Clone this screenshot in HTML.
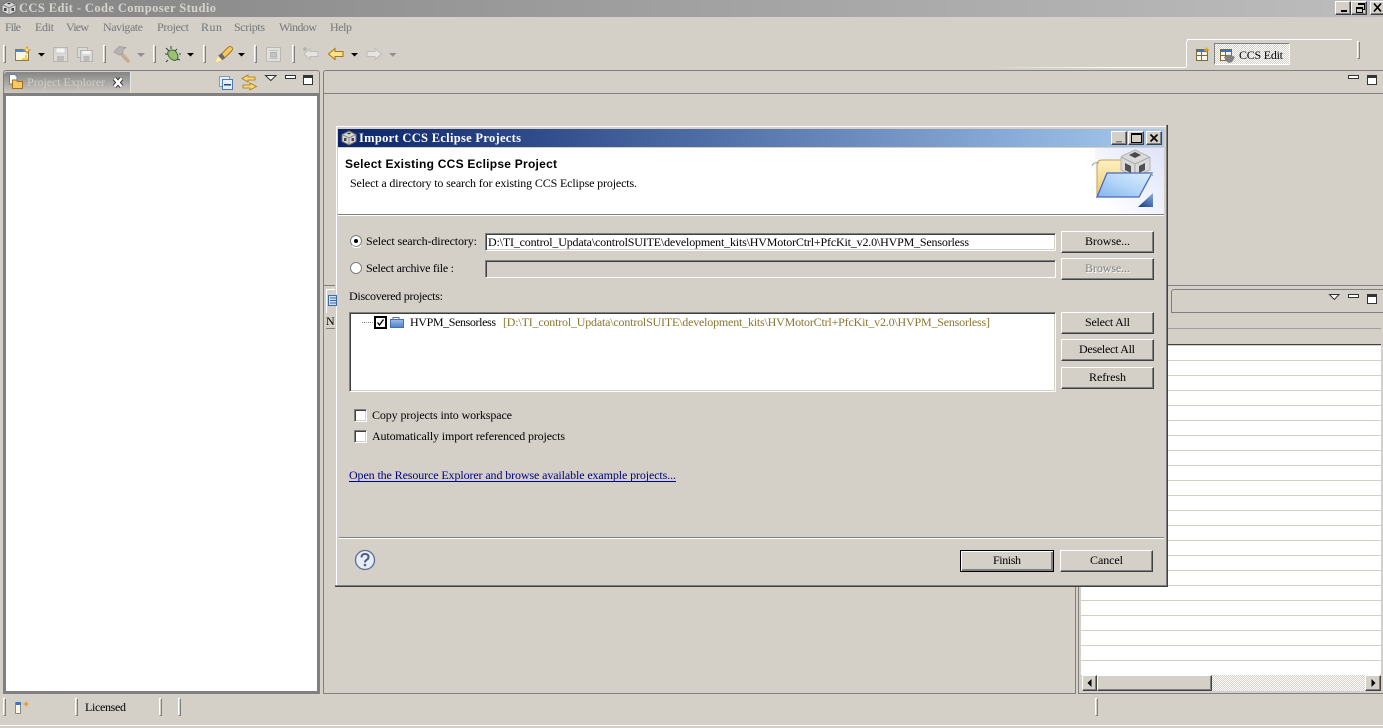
<!DOCTYPE html>
<html><head><meta charset="utf-8"><title>CCS Edit - Code Composer Studio</title>
<style>
html,body{margin:0;padding:0;background:#d4d0c8;overflow:hidden}
#p{position:relative;width:1383px;height:728px;overflow:hidden;background:#d4d0c8}
#p div{position:absolute;box-sizing:border-box}
.btn{background:#d4d0c8;border-top:1px solid #fff;border-left:1px solid #fff;border-right:1px solid #404040;border-bottom:1px solid #404040;box-shadow:inset -1px -1px 0 #808080}
.sunk{background:#fff;border-top:1px solid #808080;border-left:1px solid #808080;border-right:1px solid #fff;border-bottom:1px solid #fff;box-shadow:inset 1px 1px 0 #404040,inset -1px -1px 0 #d4d0c8}
.sep{width:3px;border-left:1px solid #fff;border-top:1px solid #fff;border-right:1px solid #808080;border-bottom:1px solid #808080}
svg{position:absolute;left:0;top:0}
text{font-family:"Liberation Serif","Noto Serif CJK SC",serif;font-size:12px;fill:#000}
.m{fill:#777}
.b{font-weight:bold}
</style></head><body><div id="p">

<!-- title bar -->
<div style="left:0;top:0;width:1383px;height:17px;background:linear-gradient(90deg,#858585,#bdbdbd)"></div>
<div class="btn" style="left:1335px;top:1px;width:16px;height:14px"></div>
<div class="btn" style="left:1351px;top:1px;width:16px;height:14px"></div>
<div class="btn" style="left:1370px;top:1px;width:16px;height:14px"></div>

<!-- toolbar separators -->
<div class="sep" style="left:3px;top:45px;height:18px"></div>
<div class="sep" style="left:103px;top:45px;height:18px"></div>
<div class="sep" style="left:153px;top:45px;height:18px"></div>
<div class="sep" style="left:203px;top:45px;height:18px"></div>
<div class="sep" style="left:254px;top:45px;height:18px"></div>
<div class="sep" style="left:292px;top:45px;height:18px"></div>

<!-- perspective bar -->
<div style="left:985px;top:67px;width:201px;height:1px;background:linear-gradient(90deg,rgba(255,255,255,0),#fff 65%)"></div>
<div style="left:1186px;top:41px;width:1px;height:26px;background:#fff"></div>
<div style="left:1187px;top:39px;width:165px;height:1px;background:#fff"></div>
<div style="left:1187px;top:40px;width:1px;height:1px;background:#fff"></div>
<div style="left:1214px;top:43px;width:76px;height:22px;border-top:1px solid #808080;border-left:1px solid #808080;border-right:1px solid #fff;border-bottom:1px solid #fff;background:repeating-conic-gradient(#fff 0 25%,#d4d0c8 0 50%) 0 0/2px 2px"></div>
<div class="sep" style="left:1357px;top:41px;height:18px"></div>

<!-- left panel -->
<div style="left:3px;top:70px;width:317px;height:624px;background:#d4d0c8;border:1px solid #808080;border-bottom:0;border-radius:3px 3px 0 0"></div>
<div style="left:4px;top:72px;width:127px;height:22px;background:linear-gradient(180deg,#858585,#cfccc4);border-right:1px solid #e8e6e0;border-radius:3px 0 0 0"></div>
<div style="left:3px;top:93px;width:317px;height:601px;background:#fff;border:3px solid #808080"></div>

<!-- center panel -->
<div style="left:323px;top:70px;width:1060px;height:216px;border:1px solid #808080;border-right:0;border-radius:3px 0 0 0"></div>
<div style="left:324px;top:93px;width:1059px;height:1px;background:#808080"></div>
<div style="left:323px;top:285px;width:753px;height:409px;border:1px solid #808080;background:#d4d0c8"></div>
<div style="left:326px;top:289px;width:1px;height:24px;background:#fff"></div>
<div style="left:327px;top:289px;width:10px;height:1px;background:#fff"></div>
<div style="left:326px;top:328px;width:12px;height:1px;background:#808080"></div>

<!-- right lower panel -->
<div style="left:1078px;top:285px;width:305px;height:409px;border-top:1px solid #808080;border-left:1px solid #808080;border-bottom:1px solid #808080;background:#d4d0c8"></div>
<div style="left:1171px;top:289px;width:212px;height:24px;border-top:1px solid #808080;border-left:1px solid #808080;border-bottom:1px solid #808080;border-radius:3px 0 0 0"></div>
<div style="left:1168px;top:328px;width:213px;height:1px;background:#a0a0a0"></div>
<div style="left:1081px;top:344px;width:300px;height:331px;background-image:linear-gradient(180deg,#fff 0 14px,#d4d0c8 14px 15px);background-size:100% 15px;background-position:0 2px"></div>
<div style="left:1081px;top:344px;width:300px;height:1px;background:#404040"></div>
<div style="left:1082px;top:675px;width:299px;height:16px;background:repeating-conic-gradient(#fff 0 25%,#d4d0c8 0 50%) 0 0/2px 2px"></div>
<div class="btn" style="left:1082px;top:675px;width:15px;height:16px"></div>
<div class="btn" style="left:1097px;top:675px;width:115px;height:16px"></div>
<div class="btn" style="left:1365px;top:675px;width:16px;height:16px"></div>

<!-- status bar -->
<div class="sep" style="left:3px;top:698px;height:18px"></div>
<div class="sep" style="left:75px;top:698px;height:18px"></div>
<div class="sep" style="left:159px;top:698px;height:18px"></div>
<div class="sep" style="left:178px;top:698px;height:18px"></div>
<div class="sep" style="left:1095px;top:698px;height:18px"></div>
<div style="left:0;top:725px;width:1383px;height:1px;background:#fff"></div>

<!-- dialog -->
<div style="left:335px;top:125px;width:833px;height:462px;background:#d4d0c8;border-right:1px solid #404040;border-bottom:1px solid #404040;box-shadow:inset -1px -1px 0 #808080,inset 1px 1px 0 #d4d0c8,inset 2px 2px 0 #fff"></div>
<div style="left:338px;top:129px;width:826px;height:18px;background:linear-gradient(90deg,#0a246a,#a6caf0)"></div>
<div class="btn" style="left:1111px;top:131px;width:16px;height:14px"></div>
<div class="btn" style="left:1128px;top:131px;width:16px;height:14px"></div>
<div class="btn" style="left:1146px;top:131px;width:16px;height:14px"></div>
<div style="left:338px;top:148px;width:826px;height:66px;background:#fff"></div>
<div style="left:338px;top:214px;width:826px;height:1px;background:#808080"></div>
<div style="left:338px;top:215px;width:826px;height:1px;background:#fff"></div>

<div class="sunk" style="left:485px;top:233px;width:571px;height:18px"></div>
<div class="sunk" style="left:485px;top:260px;width:571px;height:18px;background:#d4d0c8"></div>
<div class="btn" style="left:1061px;top:231px;width:93px;height:22px"></div>
<div class="btn" style="left:1061px;top:258px;width:93px;height:22px"></div>
<div class="sunk" style="left:349px;top:312px;width:707px;height:80px"></div>
<div class="btn" style="left:1061px;top:312px;width:93px;height:22px"></div>
<div class="btn" style="left:1061px;top:339px;width:93px;height:22px"></div>
<div class="btn" style="left:1061px;top:367px;width:93px;height:22px"></div>

<div class="sunk" style="left:354px;top:409px;width:13px;height:13px"></div>
<div class="sunk" style="left:354px;top:430px;width:13px;height:13px"></div>

<div style="left:339px;top:537px;width:825px;height:1px;background:#808080"></div>
<div style="left:339px;top:538px;width:825px;height:1px;background:#fff"></div>
<div class="btn" style="left:960px;top:550px;width:94px;height:22px;outline:1px solid #000;outline-offset:-1px;box-shadow:inset 1px 1px 0 #fff,inset -2px -2px 0 #808080"></div>
<div class="btn" style="left:1060px;top:550px;width:93px;height:22px"></div>

<svg width="1383" height="728" viewBox="0 0 1383 728">
<defs>
<linearGradient id="f1" x1="1" y1="0" x2="0" y2="1"><stop offset="0" stop-color="#dbeefc"/><stop offset="0.5" stop-color="#b4d6f8"/><stop offset="1" stop-color="#86b4ee"/></linearGradient>
<linearGradient id="f2" x1="0" y1="0" x2="0" y2="1"><stop offset="0" stop-color="#fdf0c0"/><stop offset="1" stop-color="#eec870"/></linearGradient>
<linearGradient id="f3" x1="0" y1="0" x2="0" y2="1"><stop offset="0" stop-color="#9cbfe8"/><stop offset="1" stop-color="#4f7fcc"/></linearGradient>
<linearGradient id="wiz" gradientUnits="userSpaceOnUse" x1="1164" y1="152" x2="1104" y2="205"><stop offset="0" stop-color="#dfe4f8"/><stop offset="1" stop-color="#fff"/></linearGradient>
<linearGradient id="tri" x1="1" y1="0" x2="0.3" y2="1"><stop offset="0" stop-color="#8cb0e0"/><stop offset="1" stop-color="#1f4a90"/></linearGradient>
<g id="cube">
 <path d="M8 1 15 4.500 15 11.500 8 15 1 11.500 1 4.500Z" fill="#d8d8d8" stroke="#707070"/>
 <path d="M1 4.500 8 8 15 4.500M8 8V15" fill="none" stroke="#8a8a8a"/>
 <path d="M6 3.500 8 2.500 10 3.500 8 4.500Z" fill="#333"/>
 <rect x="3" y="8" width="2.500" height="3" fill="#444"/>
 <rect x="10.500" y="8" width="2.500" height="3" fill="#444"/>
</g>
</defs>

<!-- app icon + title -->
<use href="#cube" x="1" y="0"/>
<text x="19" y="12" class="b" style="font-size:12.500px;fill:#d6d3cc" textLength="197">CCS Edit - Code Composer Studio</text>

<!-- window buttons -->
<rect x="1341" y="10" width="6" height="2" fill="#000"/>
<path d="M1358.500 4.500h6v5h-2" fill="none" stroke="#000"/><rect x="1358" y="3" width="7" height="2" fill="#000"/>
<rect x="1356.500" y="7.500" width="6" height="5" fill="#d4d0c8" stroke="#000"/><rect x="1356" y="7" width="7" height="2" fill="#000"/>
<path d="M1374 3.500 1381 11.500M1381 3.500 1374 11.500" stroke="#000" stroke-width="1.700"/>

<!-- menu -->
<g>
<text class="m" x="5" y="31" textLength="16">File</text>
<text class="m" x="35" y="31" textLength="19">Edit</text>
<text class="m" x="66" y="31" textLength="23">View</text>
<text class="m" x="103" y="31" textLength="40">Navigate</text>
<text class="m" x="157" y="31" textLength="32">Project</text>
<text class="m" x="201" y="31" textLength="21">Run</text>
<text class="m" x="234" y="31" textLength="31">Scripts</text>
<text class="m" x="279" y="31" textLength="38">Window</text>
<text class="m" x="330" y="31" textLength="22">Help</text>
</g>

<!-- toolbar icons -->
<g shape-rendering="crispEdges">
 <rect x="15.500" y="49.500" width="13" height="11" fill="#fdf6dc" stroke="#8a7a4a"/>
 <rect x="16" y="50" width="12" height="2" fill="#4a86d8"/>
 <path d="M22 59h6M26 55v5" stroke="#f0d060" stroke-width="2"/>
</g>
<path d="M27 46.500v7M23.500 50h7" stroke="#d8a020" stroke-width="1.800"/><path d="M27 48.500v3M25.500 50h3" stroke="#fff6c0" stroke-width="1"/>
<path d="M38 53h7l-3.500 3.500z" fill="#000"/>

<g>
 <rect x="53.500" y="47.500" width="14" height="14" fill="#dcdad4" stroke="#b4b4b4"/>
 <rect x="56" y="48" width="9" height="5" fill="#f4f4f4" stroke="#bdbdbd" stroke-width=".6"/>
 <rect x="57" y="56" width="7" height="5" fill="#bcbcbc"/>
</g>
<g>
 <rect x="77.500" y="47.500" width="10" height="10" fill="#dcdad4" stroke="#b4b4b4"/>
 <rect x="80.500" y="50.500" width="12" height="11" fill="#dcdad4" stroke="#b4b4b4"/>
 <rect x="82.500" y="51" width="8" height="3" fill="#f4f4f4"/>
 <rect x="83.500" y="56" width="6" height="5" fill="#bcbcbc"/>
</g>

<path d="M120 52 128 61" stroke="#c8ac90" stroke-width="3.600" stroke-linecap="round"/>
<path d="M114 52 119 46.500 126 47.500 123 50 122 54 119 55 Z" fill="#b4b4b4" stroke="#989898" stroke-width=".7"/>
<path d="M137 53h8l-4 4z" fill="#8f8f8f"/>

<path d="M172 50c4 0 6 4 6 7 0 3-3 4-5 3-3-1-6-5-5-8 0-1 2-2 4-2z" fill="#9cc070" stroke="#3f6a3a"/>
<path d="M166 48 169 51M177 49 175 51M165 54h3M177 59l3 1M168 60l-2 2M179 54h2M171 46v3" stroke="#2c4a3a" stroke-width="1"/>
<path d="M187 53h7l-3.500 3.500z" fill="#000"/>

<path d="M224 55 230 49" stroke="#a87418" stroke-width="6" stroke-linecap="round"/>
<path d="M224 55 230 49" stroke="#f6c860" stroke-width="4" stroke-linecap="round"/>
<path d="M220 58 223.500 55.500" stroke="#6a6a6a" stroke-width="6"/>
<path d="M215 63 218 56 222 60z" fill="#fff4a8" stroke="#e8d090" stroke-width=".6"/>
<path d="M238 53h7l-3.500 3.500z" fill="#000"/>

<rect x="266.500" y="47.500" width="14" height="14" fill="#e2e0da" stroke="#b8b8b8"/>
<path d="M269 50.500h9M269 58.500h9" stroke="#c0c0c0"/><rect x="270.500" y="52.500" width="6" height="4.500" fill="#c4c4c4" stroke="#9c9c9c" stroke-width=".6"/>

<path d="M304 54 310 48.500V51.500H318V56.500H310V59.500Z" fill="#e6e4de" stroke="#bcbcbc"/>
<circle cx="305" cy="49" r="1.800" fill="#b0b0b0"/>
<path d="M328.500 54 335 48.500V51.500H343V56.500H335V59.500Z" fill="#fde58a" stroke="#b87414" stroke-width="1.100"/>
<path d="M351 53h7l-3.500 3.500z" fill="#000"/>
<path d="M381.500 54 375 48.500V51.500H367V56.500H375V59.500Z" fill="#e6e4de" stroke="#bcbcbc"/>
<path d="M389 53h7.500l-3.700 3.700z" fill="#8f8f8f"/>

<!-- project explorer tab -->
<path d="M9.500 74.500H15L17 76.500V84H9.500Z" fill="#fff" stroke="#6a7fa0"/>
<path d="M12.500 81.500V88.500H22.500V81.500H17.500L16.500 80H12.500Z" fill="#f5c868" stroke="#a86c14"/>
<text x="27" y="86" style="fill:#d0cec8" textLength="78">Project Explorer</text>
<path d="M114.500 78.500 121.500 86.500M121.500 78.500 114.500 86.500" stroke="#333" stroke-width="4.600"/>
<path d="M114.500 78.500 121.500 86.500M121.500 78.500 114.500 86.500" stroke="#fff" stroke-width="2.600"/>

<rect x="219.500" y="76.500" width="10" height="10" fill="#e8eef6" stroke="#7a9cc0"/>
<rect x="222.500" y="79.500" width="10" height="10" fill="#e8eef6" stroke="#4a7ab0"/>
<rect x="224" y="84" width="7" height="1.500" fill="#1f4a80"/>
<path d="M248 75 242 78.500 248 82V80H255V77H248Z" fill="#f8d878" stroke="#a87410" stroke-width=".8"/>
<path d="M250 83 256.500 86.500 250 90V88H243V85H250Z" fill="#f8d878" stroke="#a87410" stroke-width=".8"/>
<path d="M265.500 75.500H276L270.800 80.500Z" fill="#fff" stroke="#333" stroke-width="1"/>
<rect x="285.500" y="75.500" width="10" height="3" fill="#fff" stroke="#333"/>
<rect x="303.500" y="75.500" width="9" height="9" fill="#fff" stroke="#333"/><rect x="304" y="76" width="8" height="2" fill="#333"/>

<!-- perspective icons -->
<g shape-rendering="crispEdges">
 <rect x="1196.500" y="49.500" width="11" height="11" fill="#f8f8f0" stroke="#7a6a3a"/>
 <rect x="1197" y="50" width="10" height="2" fill="#3a72c8"/>
 <path d="M1201.500 52V60M1197 55.500H1207" stroke="#7a6a3a"/>
 <rect x="1220.500" y="49.500" width="11" height="11" fill="#f8f8f0" stroke="#7a6a3a"/>
 <rect x="1221" y="50" width="10" height="2" fill="#3a72c8"/>
 <path d="M1225.500 52V60M1221 55.500H1231" stroke="#7a6a3a"/>
</g>
<path d="M1206.500 47.500v5M1204 50h5" stroke="#d8a020" stroke-width="1.500"/>
<path d="M1224 57 1229 54.500 1235 57 1232 62 1229 63 1226 61Z" fill="#808080"/>
<text x="1239" y="59" textLength="44">CCS Edit</text>

<!-- upper right view controls -->
<rect x="1348.500" y="75.500" width="10" height="3" fill="#fff" stroke="#333"/>
<rect x="1367.500" y="75.500" width="9" height="9" fill="#fff" stroke="#333"/><rect x="1368" y="76" width="8" height="2" fill="#333"/>
<path d="M1329.500 294.500H1339L1334.300 299.500Z" fill="#fff" stroke="#333"/>
<rect x="1348.500" y="294.500" width="10" height="3" fill="#fff" stroke="#333"/>
<rect x="1367.500" y="294.500" width="9" height="9" fill="#fff" stroke="#333"/><rect x="1368" y="295" width="8" height="2" fill="#333"/>

<!-- lower tab stub -->
<rect x="328.500" y="295.500" width="8" height="10" fill="#cfe0f5" stroke="#3b6aa8"/>
<path d="M330 298h6M330 300.500h6M330 303h6" stroke="#3b6aa8"/>
<text x="326" y="325" textLength="8">N</text>

<!-- scroll arrows -->
<path d="M1091.500 679 1087.500 683 1091.500 687z" fill="#000"/>
<path d="M1371.500 679 1375.500 683 1371.500 687z" fill="#000"/>

<!-- status icon -->
<g shape-rendering="crispEdges">
 <rect x="15.500" y="702.500" width="5" height="11" fill="#fcf8e0" stroke="#8a8a8a"/>
 <rect x="16" y="702" width="5" height="3" fill="#3a72c8"/>
</g>
<path d="M26 701.500v5M23.500 704h5" stroke="#d8a020" stroke-width="1.500"/>
<text x="85" y="711" textLength="41">Licensed</text>

<!-- dialog title -->
<use href="#cube" x="341" y="130"/>
<text x="359" y="142" class="b" style="fill:#fff;font-size:12.500px" textLength="162">Import CCS Eclipse Projects</text>
<rect x="1116" y="141" width="6" height="1.500" fill="#808080"/>
<rect x="1131.500" y="133.500" width="10" height="9" fill="none" stroke="#000"/><rect x="1131" y="133" width="11" height="2" fill="#000"/>
<path d="M1150.500 134.500 1157.500 141.500M1157.500 134.500 1150.500 141.500" stroke="#000" stroke-width="1.700"/>

<!-- banner -->
<rect x="1095" y="148" width="69" height="66" fill="url(#wiz)"/>
<path d="M1097 197V165Q1097 160 1102 160H1124V176H1110Z" fill="url(#f2)" stroke="#c8a050"/>
<g>
 <path d="M1135 150 1148 156 1150 158V170L1135 177 1121 170V158L1122 156Z" fill="#dadada" stroke="#b4b4b4"/>
 <path d="M1121 157 1135 164 1150 157M1135 164V177" fill="none" stroke="#a8a8a8"/>
 <path d="M1129 155 1135 152 1141 155 1135 158Z" fill="#4a4a4a"/>
 <path d="M1125 163 1131 166V173L1125 170Z" fill="#505050"/>
 <path d="M1139 166 1145 163V170L1139 173Z" fill="#505050"/>
</g>
<path d="M1107 173H1152L1139 197H1097Z" fill="url(#f1)" stroke="#4a68c0" stroke-width="1.300"/>
<path d="M1092 166Q1093 162 1099 163M1150 172 1153 176" fill="none" stroke="#a0a0a0" stroke-width="1"/>
<path d="M1153 193V207H1138Z" fill="url(#tri)"/>

<text x="345" y="168" style="font-family:'Liberation Sans',sans-serif;font-weight:bold;font-size:12px" textLength="212">Select Existing CCS Eclipse Project</text>
<text x="350" y="187" textLength="287">Select a directory to search for existing CCS Eclipse projects.</text>

<!-- radios -->
<circle cx="356" cy="241" r="5.500" fill="#fff" stroke="#808080"/><circle cx="356" cy="241" r="2" fill="#000"/>
<path d="M352 245.500a6 6 0 0 0 9 0" fill="none" stroke="#fff"/>
<circle cx="356" cy="268" r="5.500" fill="#fff" stroke="#808080"/>
<text x="366" y="245" textLength="111">Select search-directory:</text>
<text x="366" y="272" textLength="88">Select archive file :</text>
<text x="488" y="246" textLength="481">D:\TI_control_Updata\controlSUITE\development_kits\HVMotorCtrl+PfcKit_v2.0\HVPM_Sensorless</text>
<text x="1085" y="245" textLength="45">Browse...</text>
<text x="1086" y="273" style="fill:#fff" textLength="45">Browse...</text>
<text x="1085" y="272" style="fill:#808080" textLength="45">Browse...</text>
<text x="349" y="300" textLength="94">Discovered projects:</text>

<!-- tree -->
<path d="M362 322.500H374" stroke="#808080" stroke-dasharray="1 1"/>
<rect x="375" y="317" width="11" height="11" fill="#fff" stroke="#000" stroke-width="2"/>
<path d="M377.500 322.500 379.500 325 383.500 319.500" fill="none" stroke="#000" stroke-width="1.400"/>
<path d="M393 319V317.500H399V319" fill="none" stroke="#5577aa"/>
<rect x="390.500" y="319.500" width="13" height="8" fill="url(#f3)" stroke="#4a6fb0"/>
<text x="410" y="326" textLength="86">HVPM_Sensorless</text>
<text x="503" y="326" style="fill:#8b7530" textLength="487">[D:\TI_control_Updata\controlSUITE\development_kits\HVMotorCtrl+PfcKit_v2.0\HVPM_Sensorless]</text>
<text x="1085" y="326" textLength="45">Select All</text>
<text x="1079" y="353" textLength="56">Deselect All</text>
<text x="1089" y="381" textLength="37">Refresh</text>

<text x="372" y="419" textLength="140">Copy projects into workspace</text>
<text x="372" y="440" textLength="193">Automatically import referenced projects</text>
<text x="349" y="479" style="fill:#00008b" textLength="327">Open the Resource Explorer and browse available example projects...</text>
<rect x="349" y="481" width="327" height="1" fill="#00008b"/>

<!-- help -->
<circle cx="365" cy="560" r="9.500" fill="#e8ecf4" stroke="#5a6f96" stroke-width="1.300"/>
<path d="M361.500 557.500Q361.500 554 365 554 368.500 554 368.500 557 368.500 559 366.500 560 365 560.800 365 562.500" fill="none" stroke="#4a5f88" stroke-width="2"/>
<circle cx="365" cy="565" r="1.300" fill="#4a5f88"/>

<text x="993" y="564" textLength="28">Finish</text>
<text x="1090" y="564" textLength="33">Cancel</text>
</svg>
</div></body></html>
